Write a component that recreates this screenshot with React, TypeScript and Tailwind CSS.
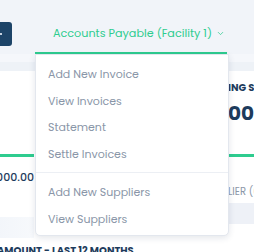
import { ChevronDown } from "lucide-react";

const menu = [
  ["Add New Invoice", "View Invoices", "Statement", "Settle Invoices"],
  ["Add New Suppliers", "View Suppliers"],
];

export default function App() {
  return (
    <div
      className="relative w-[254px] h-[252px] overflow-hidden bg-[#f1f4f9]"
      style={{ fontFamily: "Poppins, 'Noto Sans', sans-serif" }}
    >
      {/* top bar */}
      <div className="flex items-start h-[54px]">
        <div className="mt-[22px] w-[12px] h-[24px] bg-[#1d4468] rounded-r-[3px] flex items-center">
          <span className="w-[2px] h-[2px] bg-[#c7d2e0]" />
        </div>
        <div className="ml-[23px] w-[192px] h-[54px] flex items-center justify-center gap-[4px] border-b-2 border-[#2ecc8f] pt-[14px] pl-[16px] text-[#2ecc8f] text-[11.2px]">
          <span>Accounts Payable (Facility 1)</span>
          <ChevronDown size={9} strokeWidth={2} />
        </div>
      </div>

      {/* background cards */}
      <div className="h-[8px] bg-[#f5f7fb]" />
      <div className="h-[9px] bg-[#eef2f7]" />
      <div className="flex gap-[194px] ml-[-100px] bg-white">
        <div className="w-[134px] shrink-0 flex flex-col">
          <div className="h-[83px]" />
          <div className="h-[3px] bg-[#2ecc8f]" />
          <div className="mt-[12px] text-right text-[11px] text-[#1d3b5c] font-medium leading-[16px]">
            $5,000.00
          </div>
          <div className="h-[14px]" />
          <div className="mt-[18px] h-[21px] bg-gradient-to-r from-[#e6edf6] to-[#f7f9fc]" />
        </div>
        <div className="w-[120px] shrink-0 flex flex-col">
          <div className="mt-[10px] text-[10px] font-bold text-[#1d3b5c] leading-[14px] whitespace-nowrap">
            ING SUPPLIERS
          </div>
          <div className="mt-[6px] text-[20px] font-bold text-[#1d3b5c] leading-[24px]">
            000
          </div>
          <div className="mt-[29px] -ml-[6px] h-[3px] bg-[#2ecc8f]" />
          <div className="mt-[28px] text-[10px] text-[#8b97a8] leading-[14px] whitespace-nowrap">
            LIER (6)
          </div>
          <div className="mt-[4px] -ml-[6px] h-[21px] bg-[#eef1f7]" />
        </div>
      </div>
      <div className="bg-white h-[40px] pt-[6px] -ml-[3px] text-[10px] font-bold text-[#1d3b5c] leading-[14px] whitespace-nowrap">
        AMOUNT - LAST 12 MONTHS
      </div>

      {/* dropdown */}
      <div className="absolute left-[35px] top-[54px] w-[194px] bg-white border border-[#e3e7ee] rounded-b-[5px] shadow-[0_2px_6px_rgba(30,50,80,0.12)] text-[11px] text-[#8a96a8]">
        {menu.map((group, gi) => (
          <div
            key={gi}
            className={gi > 0 ? "border-t border-[#eceff4] pt-[6px] pb-[3px]" : "pt-[6px] pb-[5px]"}
          >
            {group.map((item) => (
              <div key={item} className="h-[26.5px] flex items-center pl-[12px]">
                {item}
              </div>
            ))}
          </div>
        ))}
      </div>
    </div>
  );
}
